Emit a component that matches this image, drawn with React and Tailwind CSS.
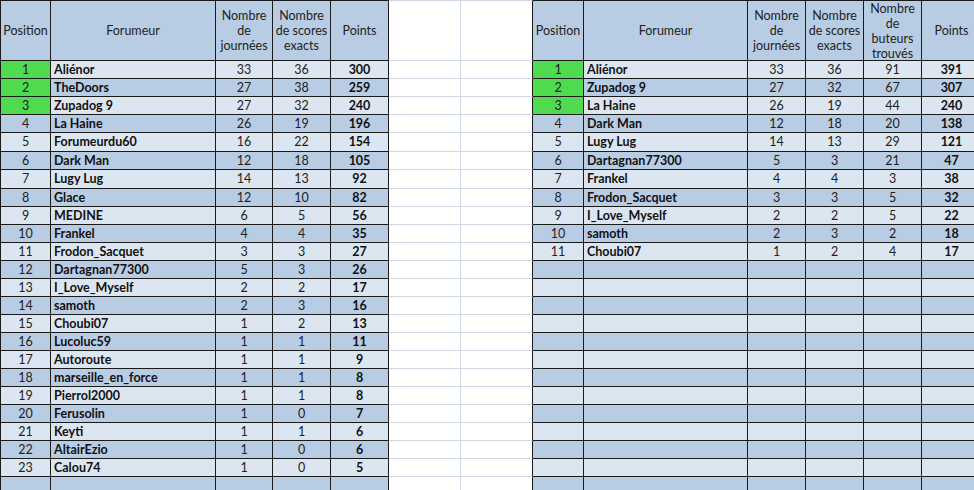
import React from 'react';

const left = [
    ['Aliénor', 33, 36, 300],
    ['TheDoors', 27, 38, 259],
    ['Zupadog 9', 27, 32, 240],
    ['La Haine', 26, 19, 196],
    ['Forumeurdu60', 16, 22, 154],
    ['Dark Man', 12, 18, 105],
    ['Lugy Lug', 14, 13, 92],
    ['Glace', 12, 10, 82],
    ['MEDINE', 6, 5, 56],
    ['Frankel', 4, 4, 35],
    ['Frodon_Sacquet', 3, 3, 27],
    ['Dartagnan77300', 5, 3, 26],
    ['I_Love_Myself', 2, 2, 17],
    ['samoth', 2, 3, 16],
    ['Choubi07', 1, 2, 13],
    ['Lucoluc59', 1, 1, 11],
    ['Autoroute', 1, 1, 9],
    ['marseille_en_force', 1, 1, 8],
    ['Pierrol2000', 1, 1, 8],
    ['Ferusolin', 1, 0, 7],
    ['Keyti', 1, 1, 6],
    ['AltairEzio', 1, 0, 6],
    ['Calou74', 1, 0, 5],
];

const right = [
    ['Aliénor', 33, 36, 91, 391],
    ['Zupadog 9', 27, 32, 67, 307],
    ['La Haine', 26, 19, 44, 240],
    ['Dark Man', 12, 18, 20, 138],
    ['Lugy Lug', 14, 13, 29, 121],
    ['Dartagnan77300', 5, 3, 21, 47],
    ['Frankel', 4, 4, 3, 38],
    ['Frodon_Sacquet', 3, 3, 5, 32],
    ['I_Love_Myself', 2, 2, 5, 22],
    ['samoth', 2, 3, 2, 18],
    ['Choubi07', 1, 2, 4, 17],
];

// grille : 5 colonnes gauche, 2 colonnes vides, 6 colonnes droite
const cols = 'grid grid-cols-[51px_165px_57px_58px_58px_72px_72px_51px_164px_58px_58px_58px_60px] grid-rows-[100%]';
const cell = 'border-r border-b border-[#1a1a1a] flex items-center overflow-hidden whitespace-nowrap';
const gapA = 'border-r border-b border-[#d0d7e5] bg-white';
const gapB = 'border-r border-b border-r-[#1a1a1a] border-b-[#d0d7e5] bg-white';

function Header() {
    return (
        <div className={`${cols} h-[61px] bg-[#b8cce4] text-center leading-[15px] text-[#222]`}>
            <div className={`${cell} justify-center border-l border-t`}>Position</div>
            <div className={`${cell} justify-center border-t`}>Forumeur</div>
            <div className={`${cell} justify-center border-t`}>Nombre<br />de<br />journées</div>
            <div className={`${cell} justify-center border-t`}>Nombre<br />de scores<br />exacts</div>
            <div className={`${cell} justify-center border-t`}>Points</div>
            <div className={`${gapA} border-t border-t-[#d0d7e5]`}></div>
            <div className={`${gapB} border-t border-t-[#d0d7e5]`}></div>
            <div className={`${cell} justify-center border-t`}>Position</div>
            <div className={`${cell} justify-center border-t`}>Forumeur</div>
            <div className={`${cell} justify-center border-t`}>Nombre<br />de<br />journées</div>
            <div className={`${cell} justify-center border-t`}>Nombre<br />de scores<br />exacts</div>
            <div className={`${cell} justify-center border-t`}>Nombre<br />de<br />buteurs<br />trouvés</div>
            <div className={`${cell} justify-center border-t`}>Points</div>
        </div>
    );
}

function Row({ i, l, r }) {
    const pos = i + 1;
    const bg = i % 2 === 0 ? 'bg-[#dce6f1]' : 'bg-[#b8cce4]';
    const green = 'bg-[#4fda4f]';
    const tall = i === 4 || i === 6 ? 'h-[19px]' : 'h-[18px]';
    return (
        <div className={`${cols} ${tall} leading-[16px]`}>
            <div className={`${cell} justify-center border-l text-[#222] ${l && pos <= 3 ? green : bg}`}>{l ? pos : ''}</div>
            <div className={`${cell} pl-[3px] font-bold ${bg}`}>{l?.[0]}</div>
            <div className={`${cell} justify-center text-[#222] ${bg}`}>{l?.[1]}</div>
            <div className={`${cell} justify-center text-[#222] ${bg}`}>{l?.[2]}</div>
            <div className={`${cell} justify-center font-bold ${bg}`}>{l?.[3]}</div>
            <div className={gapA}></div>
            <div className={gapB}></div>
            <div className={`${cell} justify-center text-[#222] ${r && pos <= 3 ? green : bg}`}>{r ? pos : ''}</div>
            <div className={`${cell} pl-[3px] font-bold ${bg}`}>{r?.[0]}</div>
            <div className={`${cell} justify-center text-[#222] ${bg}`}>{r?.[1]}</div>
            <div className={`${cell} justify-center text-[#222] ${bg}`}>{r?.[2]}</div>
            <div className={`${cell} justify-center text-[#222] ${bg}`}>{r?.[3]}</div>
            <div className={`${cell} justify-center font-bold ${bg}`}>{r?.[4]}</div>
        </div>
    );
}

export default function App() {
    const rows = Array.from({ length: 24 }, (_, i) => i);
    return (
        <div className="w-[974px] h-[490px] overflow-hidden bg-white text-[12.5px] text-[#111] font-['Lato',sans-serif]">
            <Header />
            {rows.map(i => (
                <Row key={i} i={i} l={left[i]} r={right[i]} />
            ))}
        </div>
    );
}
